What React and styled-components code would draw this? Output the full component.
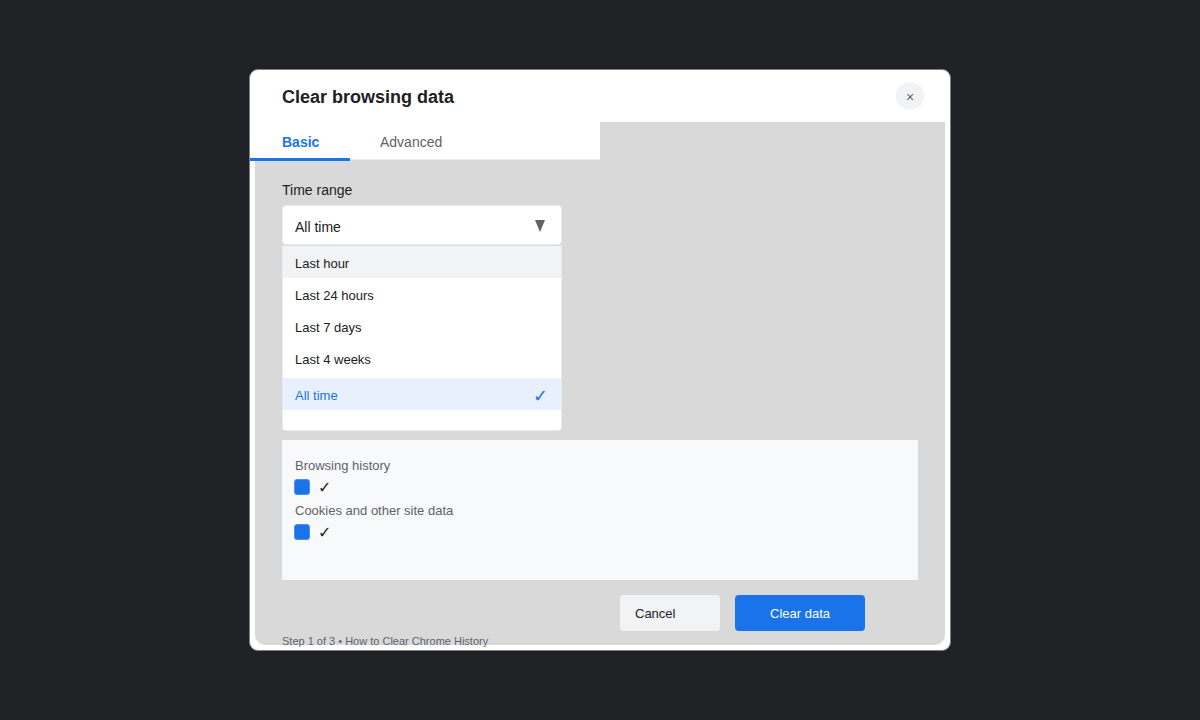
import React, { useState } from "react";
import styled, { createGlobalStyle } from "styled-components";

const GlobalStyle = createGlobalStyle`
  * {
    box-sizing: border-box;
  }

  body {
    margin: 0;
    background-color: #202124;
    color: #202124;
    font-family: "Liberation Sans", Arial, sans-serif;
    font-size: 14px;
  }

  button,
  select {
    font-family: inherit;
  }
`;

const Page = styled.main`
  display: flex;
  align-items: center;
  justify-content: center;
  min-height: 100vh;
`;

const Dialog = styled.section`
  width: 100%;
  max-width: 702px;
  border: 1px solid #7d7f83;
  border-radius: 9px;
  background-color: white;
`;

const Header = styled.header`
  display: flex;
  align-items: center;
  justify-content: space-between;
  height: 52px;
  padding: 0 26px 0 32px;
`;

const Title = styled.h1`
  margin: 0;
  padding-top: 2px;
  font-size: 18px;
  line-height: 20px;
`;

const CloseButton = styled.button`
  width: 28px;
  height: 28px;
  padding: 2px 0 0;
  border: none;
  border-radius: 50%;
  background-color: #f1f3f4;
  color: #5f6368;
  font-size: 14px;
  line-height: 14px;
  cursor: pointer;
`;

const Body = styled.div`
  margin: 0 5px 5px;
  border-radius: 0 0 10px 10px;
  background-color: #d9d9d9;
`;

const Tabs = styled.nav`
  display: flex;
  width: 350px;
  height: 38px;
  margin-left: -5px;
  border-bottom: 1px solid #e8eaed;
  background-color: white;
`;

const Tab = styled.button`
  width: 100px;
  height: 39px;
  padding: 4px 0 0 ${(props) => (props.$active ? "32px" : "30px")};
  border: none;
  border-bottom: 3px solid ${(props) => (props.$active ? "#1a73e8" : "transparent")};
  background: none;
  color: ${(props) => (props.$active ? "#1a73e8" : "#5f6368")};
  font-size: 14px;
  font-weight: ${(props) => (props.$active ? "bold" : "normal")};
  text-align: left;
  cursor: pointer;
`;

const Content = styled.div`
  padding: 22px 27px 0;
`;

const Field = styled.div`
  max-width: 280px;
`;

const Label = styled.label`
  display: block;
  margin-bottom: 7px;
  line-height: 16px;
`;

const SelectBox = styled.div`
  display: grid;
  align-items: center;

  > * {
    grid-area: 1 / 1;
  }
`;

const Select = styled.select`
  appearance: none;
  width: 100%;
  height: 40px;
  padding: 4px 12px 0;
  border: 1px solid #e8eaed;
  border-radius: 4px;
  outline: none;
  background-color: white;
  color: #202124;
  font-size: 14px;
`;

const Arrow = styled.svg`
  justify-self: end;
  margin: 2px 17px 0 0;
  pointer-events: none;
`;

const Menu = styled.ul`
  margin: 0;
  padding: 0 0 20px;
  border: 1px solid #e8eaed;
  border-top-color: #dadce0;
  border-radius: 0 0 4px 4px;
  background-color: white;
  list-style: none;
`;

const MenuItem = styled.li`
  &:last-child {
    margin-top: 4px;
  }
`;

const MenuButton = styled.button`
  display: flex;
  align-items: center;
  justify-content: space-between;
  width: 100%;
  height: 32px;
  padding: 3px 13px 0 12px;
  border: none;
  background-color: ${(props) => (props.$selected ? "#e8f0fe" : props.$hovered ? "#f1f3f4" : "white")};
  color: ${(props) => (props.$selected ? "#1a73e8" : "#202124")};
  font-size: 13px;
  text-align: left;
  cursor: pointer;
`;

const Check = styled.span`
  font-family: "DejaVu Sans", sans-serif;
  font-size: ${(props) => props.$size};
  line-height: 16px;
`;

const Panel = styled.div`
  min-height: 140px;
  margin-top: 9px;
  padding: 18px 12px;
  background-color: #f8f9fa;
`;

const Option = styled.label`
  display: grid;
  grid-template-columns: 16px auto;
  justify-content: start;
  align-items: center;
  column-gap: 8px;
  row-gap: 5px;
  margin-bottom: 8px;
  line-height: 16px;

  ${Check} {
    height: 16px;
    line-height: 18px;
  }
`;

const OptionName = styled.span`
  grid-column: 1 / -1;
  grid-row: 1;
  padding-left: 1px;
  color: #5f6368;
  font-size: 13px;
`;

const Checkbox = styled.input`
  appearance: none;
  width: 16px;
  height: 16px;
  margin: 0;
  border: 1px solid #4a90ed;
  border-radius: 3px;
  background-color: white;

  &:checked {
    background-color: #1a73e8;
  }
`;

const Actions = styled.div`
  display: flex;
  justify-content: flex-end;
  gap: 15px;
  padding: 15px 53px 0 0;
`;

const Button = styled.button`
  width: ${(props) => (props.$primary ? "130px" : "100px")};
  height: 36px;
  padding: 0 15px;
  border: none;
  border-radius: 4px;
  background-color: ${(props) => (props.$primary ? "#1a73e8" : "#f1f3f4")};
  color: ${(props) => (props.$primary ? "white" : "#202124")};
  font-size: 13px;
  text-align: ${(props) => (props.$primary ? "center" : "left")};
  cursor: pointer;
`;

const Step = styled.p`
  height: 14px;
  margin: 0;
  padding-top: 4px;
  color: #5f6368;
  font-size: 11px;
  line-height: 13px;
`;

const ranges = ["Last hour", "Last 24 hours", "Last 7 days", "Last 4 weeks", "All time"];

const App = () => {
  const [tab, setTab] = useState("Basic");
  const [range, setRange] = useState("All time");
  const [hovered, setHovered] = useState("Last hour");
  const [checked, setChecked] = useState({
    "Browsing history": true,
    "Cookies and other site data": true,
  });

  return (
    <Page>
      <GlobalStyle />
      <Dialog role="dialog" aria-labelledby="title">
        <Header>
          <Title id="title">Clear browsing data</Title>
          <CloseButton aria-label="Close">×</CloseButton>
        </Header>
        <Body>
          <Tabs>
            {["Basic", "Advanced"].map((name) => (
              <Tab key={name} $active={tab === name} onClick={() => setTab(name)}>
                {name}
              </Tab>
            ))}
          </Tabs>
          <Content>
            <Field>
              <Label htmlFor="range">Time range</Label>
              <SelectBox>
                <Select id="range" value={range} onChange={(e) => setRange(e.target.value)}>
                  {ranges.map((name) => (
                    <option key={name}>{name}</option>
                  ))}
                </Select>
                <Arrow width="10" height="12" viewBox="0 0 10 12" aria-hidden="true">
                  <path d="M0 0h10L5 12z" fill="#5f6368" />
                </Arrow>
              </SelectBox>
              <Menu>
                {ranges.map((name) => (
                  <MenuItem key={name}>
                    <MenuButton
                      $selected={range === name}
                      $hovered={hovered === name}
                      onMouseEnter={() => setHovered(name)}
                      onClick={() => setRange(name)}
                    >
                      {name}
                      {range === name && <Check $size="18px">✓</Check>}
                    </MenuButton>
                  </MenuItem>
                ))}
              </Menu>
            </Field>
            <Panel>
              {Object.keys(checked).map((name) => (
                <Option key={name}>
                  <OptionName>{name}</OptionName>
                  <Checkbox
                    type="checkbox"
                    checked={checked[name]}
                    onChange={(e) => setChecked({ ...checked, [name]: e.target.checked })}
                  />
                  {checked[name] && <Check $size="16px">✓</Check>}
                </Option>
              ))}
            </Panel>
            <Actions>
              <Button>Cancel</Button>
              <Button $primary>Clear data</Button>
            </Actions>
            <Step>Step 1 of 3 • How to Clear Chrome History</Step>
          </Content>
        </Body>
      </Dialog>
    </Page>
  );
};

export default App;
